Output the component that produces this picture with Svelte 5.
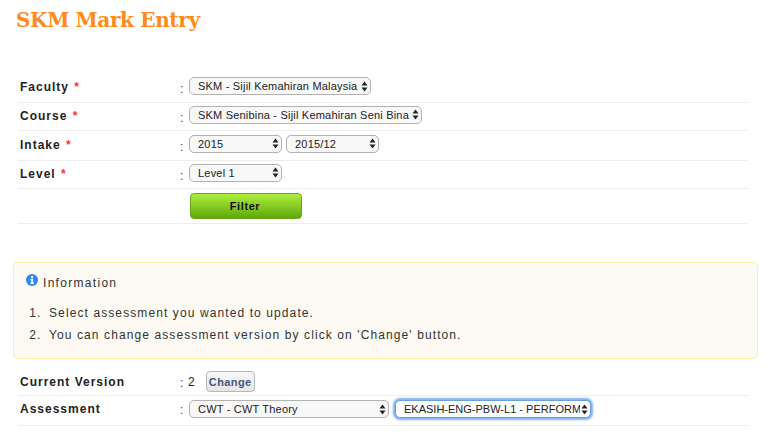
<script>
  const topRows = [
    { label: 'Faculty', h: 29, selects: [{ w: 182, v: 'SKM - Sijil Kemahiran Malaysia' }] },
    { label: 'Course', h: 28, selects: [{ w: 233, v: 'SKM Senibina - Sijil Kemahiran Seni Bina' }] },
    { label: 'Intake', h: 30, selects: [{ w: 93, v: '2015' }, { w: 93, v: '2015/12' }] },
    { label: 'Level', h: 28, selects: [{ w: 93, v: 'Level 1' }] }
  ];
</script>

{#snippet arrows()}
  <svg class="arrows" width="7" height="11" viewBox="0 0 7 11">
    <path d="M3.5 0.5 L6.5 4.5 H0.5 Z M3.5 10.5 L0.5 6.5 H6.5 Z" fill="#222" />
  </svg>
{/snippet}

<main class="page">
  <h1>SKM Mark Entry</h1>

  <section class="form top">
    {#each topRows as row}
      <div class="row lifted" style="height: {row.h}px">
        <div class="label">{row.label} <span class="req">*</span></div>
        <div class="colon">:</div>
        <div class="field raised">
          {#each row.selects as s}
            <div class="sel" style="width: {s.w}px">
              <select><option>{s.v}</option></select>
              {@render arrows()}
            </div>
          {/each}
        </div>
      </div>
    {/each}
    <div class="row filter-row">
      <div class="label"></div>
      <div class="colon"></div>
      <div class="field"><button class="filter">Filter</button></div>
    </div>
  </section>

  <section class="info">
    <div class="info-head">
      <svg width="12" height="12" viewBox="0 0 12 12">
        <circle cx="6" cy="6" r="6" fill="#2f86f0" />
        <rect x="5" y="2.2" width="2.1" height="2" fill="#fff" />
        <path d="M4.4 5 H7.1 V8.8 H8 V10 H4.3 V8.8 H5.1 V6.2 H4.4 Z" fill="#fff" />
      </svg>
      <span>Information</span>
    </div>
    <ol>
      <li>Select assessment you wanted to update.</li>
      <li>You can change assessment version by click on 'Change' button.</li>
    </ol>
  </section>

  <section class="form bottom">
    <div class="row version">
      <div class="label">Current Version</div>
      <div class="colon">:</div>
      <div class="field version-field"><span class="num">2</span><button class="change">Change</button></div>
    </div>
    <div class="row assess">
      <div class="label">Assessment</div>
      <div class="colon">:</div>
      <div class="field">
        <div class="sel" style="width: 200px">
          <select><option>CWT - CWT Theory</option></select>
          {@render arrows()}
        </div>
        <div class="sel focus">
          <select><option>EKASIH-ENG-PBW-L1 - PERFORM</option></select>
          {@render arrows()}
        </div>
      </div>
    </div>
  </section>
</main>

<style>
  :global(body) { margin: 0; background: #fff; }
  .page {
    width: 770px;
    height: 437px;
    overflow: hidden;
    box-sizing: border-box;
    font-family: "Liberation Sans", Arial, sans-serif;
    color: #222;
  }
  h1 {
    margin: 0;
    padding: 8px 0 0 16px;
    height: 65px;
    box-sizing: border-box;
    font: bold 20px "DejaVu Serif", Georgia, serif;
    letter-spacing: -0.35px;
    color: #ff8a1c;
  }
  .form { margin: 0 22px 0 18px; }
  .top { margin-top: 9px; }
  .row {
    display: flex;
    align-items: center;
    border-bottom: 1px solid #eee;
    box-sizing: border-box;
  }
  .lifted { padding-bottom: 2px; }
  .lifted .colon { padding-top: 4px; }
  .label {
    width: 160px;
    padding-left: 2px;
    font-size: 12px;
    font-weight: bold;
    letter-spacing: 1px;
    color: #222;
  }
  .req { color: #f33; margin-left: 1px; }
  .colon { width: 9px; font-size: 12px; color: #444; padding-top: 2px; }
  .field { display: flex; align-items: center; gap: 4px; }
  .raised { margin-bottom: 2px; }
  .sel {
    position: relative;
    height: 18px;
  }
  select {
    appearance: none;
    display: block;
    width: 100%;
    height: 100%;
    margin: 0;
    padding: 0 10px 0 8px;
    border: 1px solid #b3b3b3;
    border-radius: 5px;
    background: #f8f8f8;
    font: 11px "Liberation Sans", Arial, sans-serif;
    letter-spacing: 0.2px;
    color: #222;
    outline: none;
  }
  .arrows { position: absolute; right: 3px; top: 3.5px; pointer-events: none; }
  .focus { width: 196px; margin-left: 2px; }
  .focus select {
    border-color: #6a9fe0;
    background: #fff;
    letter-spacing: 0;
    box-shadow: 0 0 2px 2px #7db2f2;
  }
  .filter-row { height: 35px; }
  .filter {
    width: 112px;
    height: 26px;
    margin-left: 1px;
    margin-top: -1px;
    border: 1px solid #6aa516;
    border-radius: 4px;
    background: linear-gradient(#aeee3e, #5fa80a);
    font: bold 11px "Liberation Sans", Arial, sans-serif;
    letter-spacing: 0.6px;
    color: #111;
    padding: 1px 2px 0 0;
  }
  .info {
    margin: 38px 12px 0 13px;
    height: 97px;
    box-sizing: border-box;
    background: #fcfaf2;
    border: 1px solid #f8eda9;
    border-radius: 5px;
    padding: 11px 0 0 12px;
    font-size: 12px;
    letter-spacing: 1.1px;
    color: #333;
  }
  .info-head { display: flex; align-items: flex-start; gap: 5px; height: 20px; }
  .info-head span { line-height: 15px; margin-top: 2px; letter-spacing: 1.3px; }
  ol { margin: 11px 0 0; padding: 0 0 0 20px; }
  li { height: 22px; line-height: 16px; padding-left: 3px; }
  .bottom { margin-top: 11px; }
  .version { height: 26px; padding-bottom: 2px; }
  .version-field { gap: 10px; margin-left: -1px; }
  .num { font-size: 12px; letter-spacing: 1px; }
  .change {
    width: 49px;
    height: 21px;
    padding: 0;
    border: 1px solid #b8b8b8;
    border-radius: 4px;
    background: linear-gradient(#f8f8f8, #e6e6e6);
    font: bold 11px "Liberation Sans", Arial, sans-serif;
    letter-spacing: 0.4px;
    color: #44557f;
  }
  .assess { height: 30px; padding-bottom: 3px; }
</style>
